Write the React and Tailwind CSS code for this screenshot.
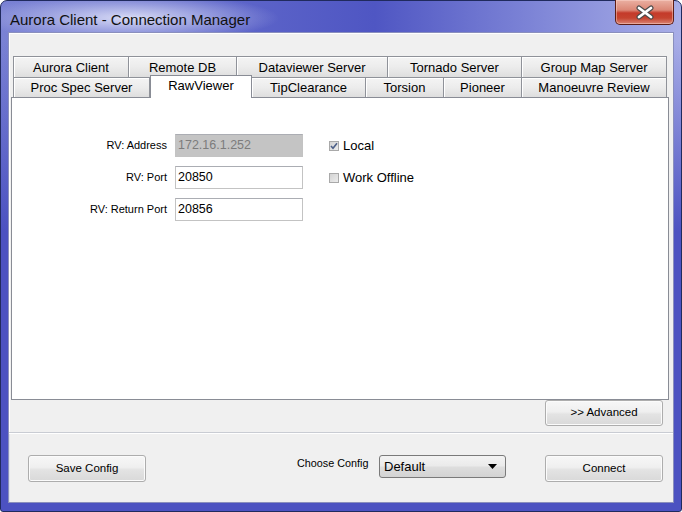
import React from "react";

const row1 = [
  [116, "Aurora Client"],
  [108, "Remote DB"],
  [151, "Dataviewer Server"],
  [134, "Tornado Server"],
  [145, "Group Map Server"],
];
const row2 = [
  [137, "Proc Spec Server"],
  [102, "RawViewer", true],
  [114, "TipClearance"],
  [78, "Torsion"],
  [78, "Pioneer"],
  [145, "Manoeuvre Review"],
];

function Tab({ w, label, selected, first, h }) {
  if (selected) {
    return (
      <div
        style={{ width: w }}
        className="relative z-10 -mt-[2px] h-[23px] shrink-0 border border-b-0 border-[#898c95] bg-white flex justify-center pt-[2px] text-[13px] leading-[15px] text-black"
      >
        {label}
      </div>
    );
  }
  return (
    <div
      style={{ width: w }}
      className={
        "shrink-0 border-t border-r border-[#8f9299] bg-[linear-gradient(180deg,#f4f4f4_0%,#ececec_50%,#dedede_100%)] shadow-[inset_1px_1px_0_#ffffff] flex items-center justify-center text-[13px] leading-[15px] text-black " +
        (first ? "border-l " : "") +
        h
      }
    >
      {label}
    </div>
  );
}

function WinButton({ children, className = "" }) {
  return (
    <div
      className={
        "flex items-center justify-center rounded-[3px] border border-[#adadad] bg-[linear-gradient(180deg,#f7f7f7_0%,#efefef_45%,#e3e3e3_55%,#d9d9d9_100%)] shadow-[inset_0_0_0_1px_#fbfbfb] text-[11.5px] text-black " +
        className
      }
    >
      {children}
    </div>
  );
}

function Check({ checked, label }) {
  return (
    <div className="flex items-center h-[23px] ml-[18px]">
      <div className="w-[10px] h-[10px] border border-[#a9a9a9] bg-[linear-gradient(135deg,#d4d4d4_0%,#ececec_100%)] flex items-center justify-center">
        {checked && (
          <svg width="8" height="8" viewBox="0 0 8 8">
            <path d="M1 4 L3 6.2 L7 1.3" fill="none" stroke="#4c5f88" strokeWidth="1.6" />
          </svg>
        )}
      </div>
      <span className="ml-[4px] text-[13px] leading-[15px] text-black">{label}</span>
    </div>
  );
}

function Field({ value, disabled }) {
  return (
    <div
      className={
        "h-[23px] border border-[#c3c3c3] border-t-[#abadb3] flex items-center pl-[2px] text-[12.5px] " +
        (disabled ? "bg-[#c4c4c4] border-[#a8a8a8] text-[#7c7c7c]" : "bg-white text-black")
      }
    >
      {value}
    </div>
  );
}

export default function App() {
  return (
    <div className="w-[682px] h-[512px] overflow-hidden font-['Liberation_Sans',Arial,sans-serif]">
      <div className="w-[682px] h-[512px] flex flex-col rounded-t-[7px] rounded-b-[3px] border border-[#202a5e] bg-[linear-gradient(180deg,rgba(76,82,193,0)_40px,#4c52c1_230px),linear-gradient(90deg,#7a82d4_0%,#6068ca_30%,#4f56c3_55%,#8188d8_80%,#a9aee7_100%)]">
        {/* Title bar */}
        <div className="h-[31px] flex items-start justify-between bg-[radial-gradient(ellipse_150px_24px_at_128px_17px,rgba(235,237,252,0.85)_0%,rgba(200,204,240,0.5)_55%,rgba(200,204,240,0)_100%)]">
          <div className="pl-[9px] pt-[10px] text-[15px] leading-[17px] text-[#111111]">
            Aurora Client - Connection Manager
          </div>
          <div className="mr-[7px] -mt-px w-[59px] h-[25px] rounded-b-[5px] border border-[#5e1d14] border-t-0 bg-[linear-gradient(180deg,#eab0a2_0%,#db8776_42%,#c43a2a_54%,#c5432f_75%,#da8474_100%)] shadow-[inset_0_0_0_1px_rgba(255,220,210,0.45)] flex items-center justify-center">
            <svg width="20" height="15" viewBox="0 0 20 15">
              <path d="M4 3 L16 12 M16 3 L4 12" stroke="#4a4a4a" strokeWidth="5" strokeLinecap="round" />
              <path d="M4 3 L16 12 M16 3 L4 12" stroke="#ffffff" strokeWidth="2.8" strokeLinecap="round" />
            </svg>
          </div>
        </div>

        {/* Client area */}
        <div className="mx-[7px] h-[471px] border border-[#8a8fbd] bg-[#f0f0f0] flex flex-col">
          {/* Top section */}
          <div className="h-[400px] border-b border-[#c9ccd3] shadow-[inset_1px_1px_0_#ffffff] pt-[23px]">
            <div className="ml-[4px] w-[654px]">
              <div className="flex h-[21px]">
                {row1.map(([w, l], i) => (
                  <Tab key={l} w={w} label={l} first={i === 0} h="h-[21px]" />
                ))}
              </div>
              <div className="flex h-[20px] items-start">
                {row2.map(([w, l, s], i) => (
                  <Tab key={l} w={w} label={l} selected={s} first={i === 0} h="h-[20px]" />
                ))}
              </div>
            </div>
            <div className="ml-[2px] w-[658px] h-[303px] border border-[#898c95] bg-white pt-[36px]">
              <div className="grid grid-cols-[155px_128px_auto] gap-x-[8px] gap-y-[9px] items-center">
                <div className="text-right text-[11px] text-black">RV: Address</div>
                <Field value="172.16.1.252" disabled />
                <Check checked label="Local" />
                <div className="text-right text-[11px] text-black">RV: Port</div>
                <Field value="20850" />
                <Check label="Work Offline" />
                <div className="text-right text-[11px] text-black">RV: Return Port</div>
                <Field value="20856" />
                <div />
              </div>
            </div>
            <div className="flex justify-end pr-[10px]">
              <WinButton className="w-[118px] h-[26px]">&gt;&gt; Advanced</WinButton>
            </div>
          </div>

          {/* Bottom section */}
          <div className="flex-1 border-t border-white shadow-[inset_1px_0_0_#dde2ea] flex items-start pt-[21px] pl-[19px] pr-[10px]">
            <WinButton className="w-[118px] h-[27px]">Save Config</WinButton>
            <div className="ml-[151px] w-[82px] mt-[1px] text-[10.8px] leading-[14px] text-black">
              Choose Config
            </div>
            <div className="w-[127px] h-[23px] rounded-[3px] border border-[#7a7a7a] bg-[linear-gradient(180deg,#f3f3f3_0%,#ebebeb_45%,#dddddd_55%,#d3d3d3_100%)] flex items-center pl-[4px] pr-[8px] text-[13px] text-black">
              <span className="flex-1 pt-[1px]">Default</span>
              <svg width="9" height="5" viewBox="0 0 9 5">
                <path d="M0 0 L9 0 L4.5 5 Z" fill="#000000" />
              </svg>
            </div>
            <WinButton className="ml-auto w-[118px] h-[27px]">Connect</WinButton>
          </div>
        </div>
        <div className="flex-1" />
      </div>
    </div>
  );
}
